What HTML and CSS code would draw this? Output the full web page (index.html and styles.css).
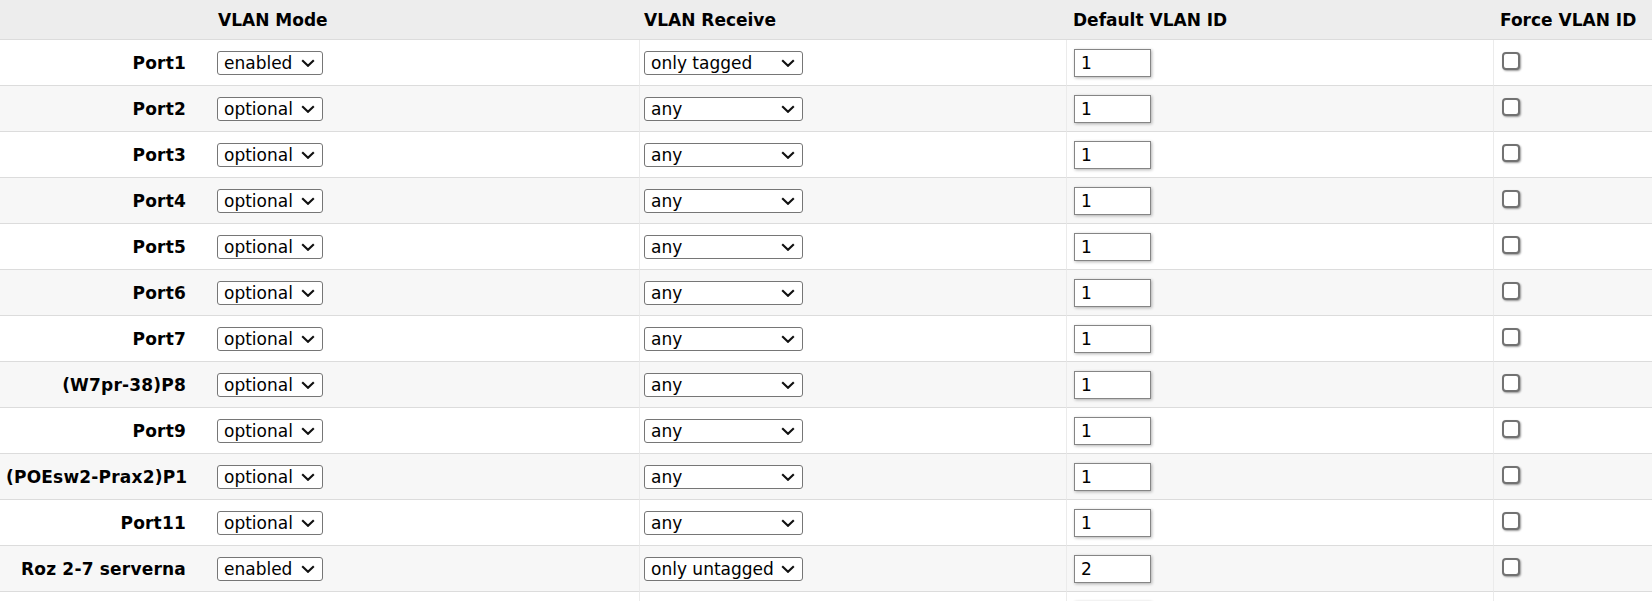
FILE: index.html
```html
<!DOCTYPE html>
<html lang="en">
<head>
    <meta charset="UTF-8">
    <title>VLAN Settings</title>
    <link rel="stylesheet" href="styles.css">
</head>
<body>

    <!-- Port VLAN table -->
    <table class="vlan-table">
        <colgroup>
            <col class="c-name">
            <col class="c-mode">
            <col class="c-recv">
            <col class="c-id">
            <col class="c-force">
        </colgroup>
        <thead>
            <tr>
                <th></th>
                <th>VLAN Mode</th>
                <th class="h-recv">VLAN Receive</th>
                <th>Default VLAN ID</th>
                <th>Force VLAN ID</th>
            </tr>
        </thead>
        <tbody>
            <tr>
                <td class="port">Port1</td>
                <td><select class="mode"><option>enabled</option><option>optional</option><option>disabled</option></select></td>
                <td class="sep"><select class="recv"><option>only tagged</option><option>any</option><option>only untagged</option></select></td>
                <td class="sep"><input type="text" class="vid" value="1"></td>
                <td class="sep"><input type="checkbox" class="force"></td>
            </tr>
            <tr>
                <td class="port">Port2</td>
                <td><select class="mode"><option>optional</option><option>enabled</option><option>disabled</option></select></td>
                <td class="sep"><select class="recv"><option>any</option><option>only tagged</option><option>only untagged</option></select></td>
                <td class="sep"><input type="text" class="vid" value="1"></td>
                <td class="sep"><input type="checkbox" class="force"></td>
            </tr>
            <tr>
                <td class="port">Port3</td>
                <td><select class="mode"><option>optional</option><option>enabled</option><option>disabled</option></select></td>
                <td class="sep"><select class="recv"><option>any</option><option>only tagged</option><option>only untagged</option></select></td>
                <td class="sep"><input type="text" class="vid" value="1"></td>
                <td class="sep"><input type="checkbox" class="force"></td>
            </tr>
            <tr>
                <td class="port">Port4</td>
                <td><select class="mode"><option>optional</option><option>enabled</option><option>disabled</option></select></td>
                <td class="sep"><select class="recv"><option>any</option><option>only tagged</option><option>only untagged</option></select></td>
                <td class="sep"><input type="text" class="vid" value="1"></td>
                <td class="sep"><input type="checkbox" class="force"></td>
            </tr>
            <tr>
                <td class="port">Port5</td>
                <td><select class="mode"><option>optional</option><option>enabled</option><option>disabled</option></select></td>
                <td class="sep"><select class="recv"><option>any</option><option>only tagged</option><option>only untagged</option></select></td>
                <td class="sep"><input type="text" class="vid" value="1"></td>
                <td class="sep"><input type="checkbox" class="force"></td>
            </tr>
            <tr>
                <td class="port">Port6</td>
                <td><select class="mode"><option>optional</option><option>enabled</option><option>disabled</option></select></td>
                <td class="sep"><select class="recv"><option>any</option><option>only tagged</option><option>only untagged</option></select></td>
                <td class="sep"><input type="text" class="vid" value="1"></td>
                <td class="sep"><input type="checkbox" class="force"></td>
            </tr>
            <tr>
                <td class="port">Port7</td>
                <td><select class="mode"><option>optional</option><option>enabled</option><option>disabled</option></select></td>
                <td class="sep"><select class="recv"><option>any</option><option>only tagged</option><option>only untagged</option></select></td>
                <td class="sep"><input type="text" class="vid" value="1"></td>
                <td class="sep"><input type="checkbox" class="force"></td>
            </tr>
            <tr>
                <td class="port">(W7pr-38)P8</td>
                <td><select class="mode"><option>optional</option><option>enabled</option><option>disabled</option></select></td>
                <td class="sep"><select class="recv"><option>any</option><option>only tagged</option><option>only untagged</option></select></td>
                <td class="sep"><input type="text" class="vid" value="1"></td>
                <td class="sep"><input type="checkbox" class="force"></td>
            </tr>
            <tr>
                <td class="port">Port9</td>
                <td><select class="mode"><option>optional</option><option>enabled</option><option>disabled</option></select></td>
                <td class="sep"><select class="recv"><option>any</option><option>only tagged</option><option>only untagged</option></select></td>
                <td class="sep"><input type="text" class="vid" value="1"></td>
                <td class="sep"><input type="checkbox" class="force"></td>
            </tr>
            <tr>
                <td class="port">(POEsw2-Prax2)P1</td>
                <td><select class="mode"><option>optional</option><option>enabled</option><option>disabled</option></select></td>
                <td class="sep"><select class="recv"><option>any</option><option>only tagged</option><option>only untagged</option></select></td>
                <td class="sep"><input type="text" class="vid" value="1"></td>
                <td class="sep"><input type="checkbox" class="force"></td>
            </tr>
            <tr>
                <td class="port">Port11</td>
                <td><select class="mode"><option>optional</option><option>enabled</option><option>disabled</option></select></td>
                <td class="sep"><select class="recv"><option>any</option><option>only tagged</option><option>only untagged</option></select></td>
                <td class="sep"><input type="text" class="vid" value="1"></td>
                <td class="sep"><input type="checkbox" class="force"></td>
            </tr>
            <tr>
                <td class="port">Roz 2-7 serverna</td>
                <td><select class="mode"><option>enabled</option><option>optional</option><option>disabled</option></select></td>
                <td class="sep"><select class="recv"><option>only untagged</option><option>any</option><option>only tagged</option></select></td>
                <td class="sep"><input type="text" class="vid" value="2"></td>
                <td class="sep"><input type="checkbox" class="force"></td>
            </tr>
            <tr>
                <td class="port"></td>
                <td><select class="mode"><option>optional</option><option>enabled</option><option>disabled</option></select></td>
                <td class="sep"><select class="recv"><option>any</option><option>only tagged</option><option>only untagged</option></select></td>
                <td class="sep"><input type="text" class="vid" value="1"></td>
                <td class="sep"><input type="checkbox" class="force"></td>
            </tr>
        </tbody>
    </table>

</body>
</html>
```

FILE: styles.css
```css
body, html {
    margin: 0;
    padding: 0;
    background: #fff;
    font-family: "DejaVu Sans", Verdana, sans-serif;
    color: #000;
}
/* Table */
.vlan-table {
    width: 100%;
    border-collapse: separate;
    border-spacing: 0;
    table-layout: fixed;
    font-size: 17px;
}
.c-name { width: 211px; }
.c-mode { width: 428px; }
.c-recv { width: 427px; }
.c-id { width: 427px; }
.vlan-table th,
.vlan-table td {
    box-sizing: border-box;
    border-bottom: 1px solid #dcdcdc;
    white-space: nowrap;
    overflow: hidden;
}
.vlan-table thead th {
    height: 40px;
    background-color: #ededed;
    text-align: left;
    font-weight: bold;
    padding: 0 0 0 7px;
}
.vlan-table thead th.h-recv {
    padding-left: 5px;
}
.vlan-table td {
    height: 46px;
    padding: 0 0 0 6px;
    vertical-align: middle;
}
.vlan-table tbody tr:nth-child(even) td {
    background-color: #f7f7f7;
}
.vlan-table td.sep {
    border-left: 1px solid #ebebeb;
}
.port {
    text-align: right;
    font-weight: bold;
    letter-spacing: 0.2px;
    padding-right: 25px !important;
}
/* Form controls */
select {
    appearance: none;
    -webkit-appearance: none;
    box-sizing: border-box;
    height: 24px;
    margin: 0;
    padding: 0 0 0 6px;
    border: 1px solid #767676;
    border-radius: 3px;
    background: #fff url("data:image/svg+xml,%3Csvg xmlns='http://www.w3.org/2000/svg' width='14' height='8' viewBox='0 0 14 8'%3E%3Cpath d='M1.2 1.2l5.8 5.6 5.8-5.6' fill='none' stroke='%23111' stroke-width='2.1'/%3E%3C/svg%3E") no-repeat right 7px center;
    font-family: "DejaVu Sans", Verdana, sans-serif;
    font-size: 17px;
    color: #000;
    vertical-align: middle;
}
select.mode {
    width: 106px;
}
select.recv {
    width: 159px;
    margin-left: -2px;
}
.vid {
    box-sizing: border-box;
    width: 77px;
    height: 28px;
    margin: 0 0 0 1px;
    padding: 0 0 0 6px;
    border: 1px solid #858585;
    border-radius: 0;
    box-shadow: 1px 1px 3px rgba(0, 0, 0, 0.3);
    font-family: "DejaVu Sans", Verdana, sans-serif;
    font-size: 17px;
    color: #000;
    vertical-align: middle;
}
.force {
    appearance: none;
    -webkit-appearance: none;
    box-sizing: border-box;
    width: 18px;
    height: 18px;
    margin: 0 0 4px 2px;
    border: 2px solid #727272;
    border-radius: 4px;
    background: #fff;
    box-shadow: 1px 1px 2px rgba(0, 0, 0, 0.4);
    vertical-align: middle;
}
```
